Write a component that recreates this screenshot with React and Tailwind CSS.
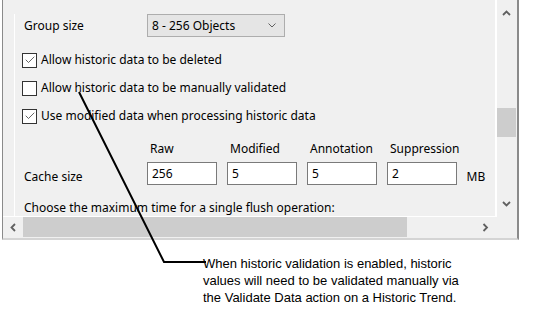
import { Check } from 'lucide-react';

const font = { fontFamily: '"Noto Sans", "Open Sans", sans-serif' };

function CheckRow({ checked, label }) {
    return (
        <div className="h-[28px] flex items-center">
            <div className="ml-[7px] w-[15px] h-[15px] border border-[#333333] bg-white flex items-center justify-center">
                {checked && <Check size={12} strokeWidth={1.5} className="text-[#333333]" />}
            </div>
            <span className="ml-[4px] text-[12px] text-black leading-none">{label}</span>
        </div>
    );
}

function CacheInput({ value }) {
    return (
        <div className="w-[70px] h-[23px] border border-[#7a7a7a] bg-white pl-[4px] flex items-center text-[12px] leading-none">
            {value}
        </div>
    );
}

function Arrow({ dir }) {
    const paths = {
        up: 'M1 6 L4.5 2.5 L8 6',
        down: 'M1 2 L4.5 5.5 L8 2',
        left: 'M6 1 L2.5 4.5 L6 8',
        right: 'M2.5 1 L6 4.5 L2.5 8',
    };
    return (
        <svg width="9" height="9" viewBox="0 0 9 9">
            <path d={paths[dir]} fill="none" stroke="#606060" strokeWidth="1.8" />
        </svg>
    );
}

export default function App() {
    return (
        <div className="relative w-[534px] h-[325px] bg-white overflow-hidden" style={font}>
            {/* window */}
            <div className="ml-[2px] w-[517px] h-[240px] bg-[#f0f0f0] border-l border-[#8a8a8a] border-r-2 border-r-[#8a8a8a] border-b-2 border-b-[#d4d4d4] flex flex-col">
                <div className="flex h-[217px]">
                    {/* scrolled content */}
                    <div className="w-[493px] h-[217px] overflow-hidden border-r border-b border-white pl-[11px]">
                        <div className="h-full border-l border-white text-black">
                            <div className="mt-[14px] h-[23px] flex items-center">
                                <span className="ml-[9px] w-[123px] text-[12px] leading-none">Group size</span>
                                <div className="w-[138px] h-[23px] border border-[#adadad] bg-[#e5e5e5] flex items-center justify-between pl-[4px] pr-[8px]">
                                    <span className="text-[12px] leading-none">8 - 256 Objects</span>
                                    <svg width="8" height="5" viewBox="0 0 8 5">
                                        <path d="M0.5 0.5 L4 4 L7.5 0.5" fill="none" stroke="#606060" strokeWidth="1" />
                                    </svg>
                                </div>
                            </div>
                            <div className="mt-[9px]">
                                <CheckRow checked label="Allow historic data to be deleted" />
                                <CheckRow label="Allow historic data to be manually validated" />
                                <CheckRow checked label="Use modified data when processing historic data" />
                            </div>
                            <div className="mt-[10px] flex">
                                <div className="w-[132px] flex flex-col justify-end">
                                    <span className="ml-[9px] mb-[2px] text-[12px] leading-none">Cache size</span>
                                </div>
                                <div className="flex gap-[10px] items-end">
                                    {[['Raw', '256'], ['Modified', '5'], ['Annotation', '5'], ['Suppression', '2']].map(([h, v]) => (
                                        <div key={h} className="flex flex-col">
                                            <span className="ml-[3px] pt-[3px] h-[19px] text-[12px] leading-none">{h}</span>
                                            <div className="mt-[3px]">
                                                <CacheInput value={v} />
                                            </div>
                                        </div>
                                    ))}
                                    <span className="ml-[-3px] mb-[2px] text-[12px] leading-none">MB</span>
                                </div>
                            </div>
                            <div className="mt-[17px] ml-[9px] text-[12px] leading-none">
                                Choose the maximum time for a single flush operation:
                            </div>
                        </div>
                    </div>
                    {/* vertical scrollbar */}
                    <div className="w-[20px] h-[217px] border-l border-white flex flex-col items-center">
                        <div className="mt-[9px]"><Arrow dir="up" /></div>
                        <div className="mt-[90px] w-[19px] h-[29px] bg-[#cdcdcd]" />
                        <div className="mt-[63px]"><Arrow dir="down" /></div>
                    </div>
                </div>
                {/* horizontal scrollbar */}
                <div className="flex h-[20px]">
                    <div className="w-[493px] flex items-center">
                        <div className="w-[20px] flex justify-center"><Arrow dir="left" /></div>
                        <div className="w-[384px] h-[20px] bg-[#cdcdcd]" />
                        <div className="flex-1 flex justify-end pr-[6px]"><Arrow dir="right" /></div>
                    </div>
                    <div className="flex-1" />
                </div>
            </div>

            {/* callout */}
            <svg className="absolute left-0 top-0 pointer-events-none" width="534" height="325">
                <polyline points="79,92 164,262 206,262" fill="none" stroke="#000" strokeWidth="2" />
            </svg>
            <div
                className="absolute left-[203px] top-[255px] text-[13px] leading-[17px] text-black"
                style={{ fontFamily: '"Liberation Sans", Arial, sans-serif' }}
            >
                <div>When historic validation is enabled, historic</div>
                <div>values will need to be validated manually via</div>
                <div>the Validate Data action on a Historic Trend.</div>
            </div>
        </div>
    );
}
